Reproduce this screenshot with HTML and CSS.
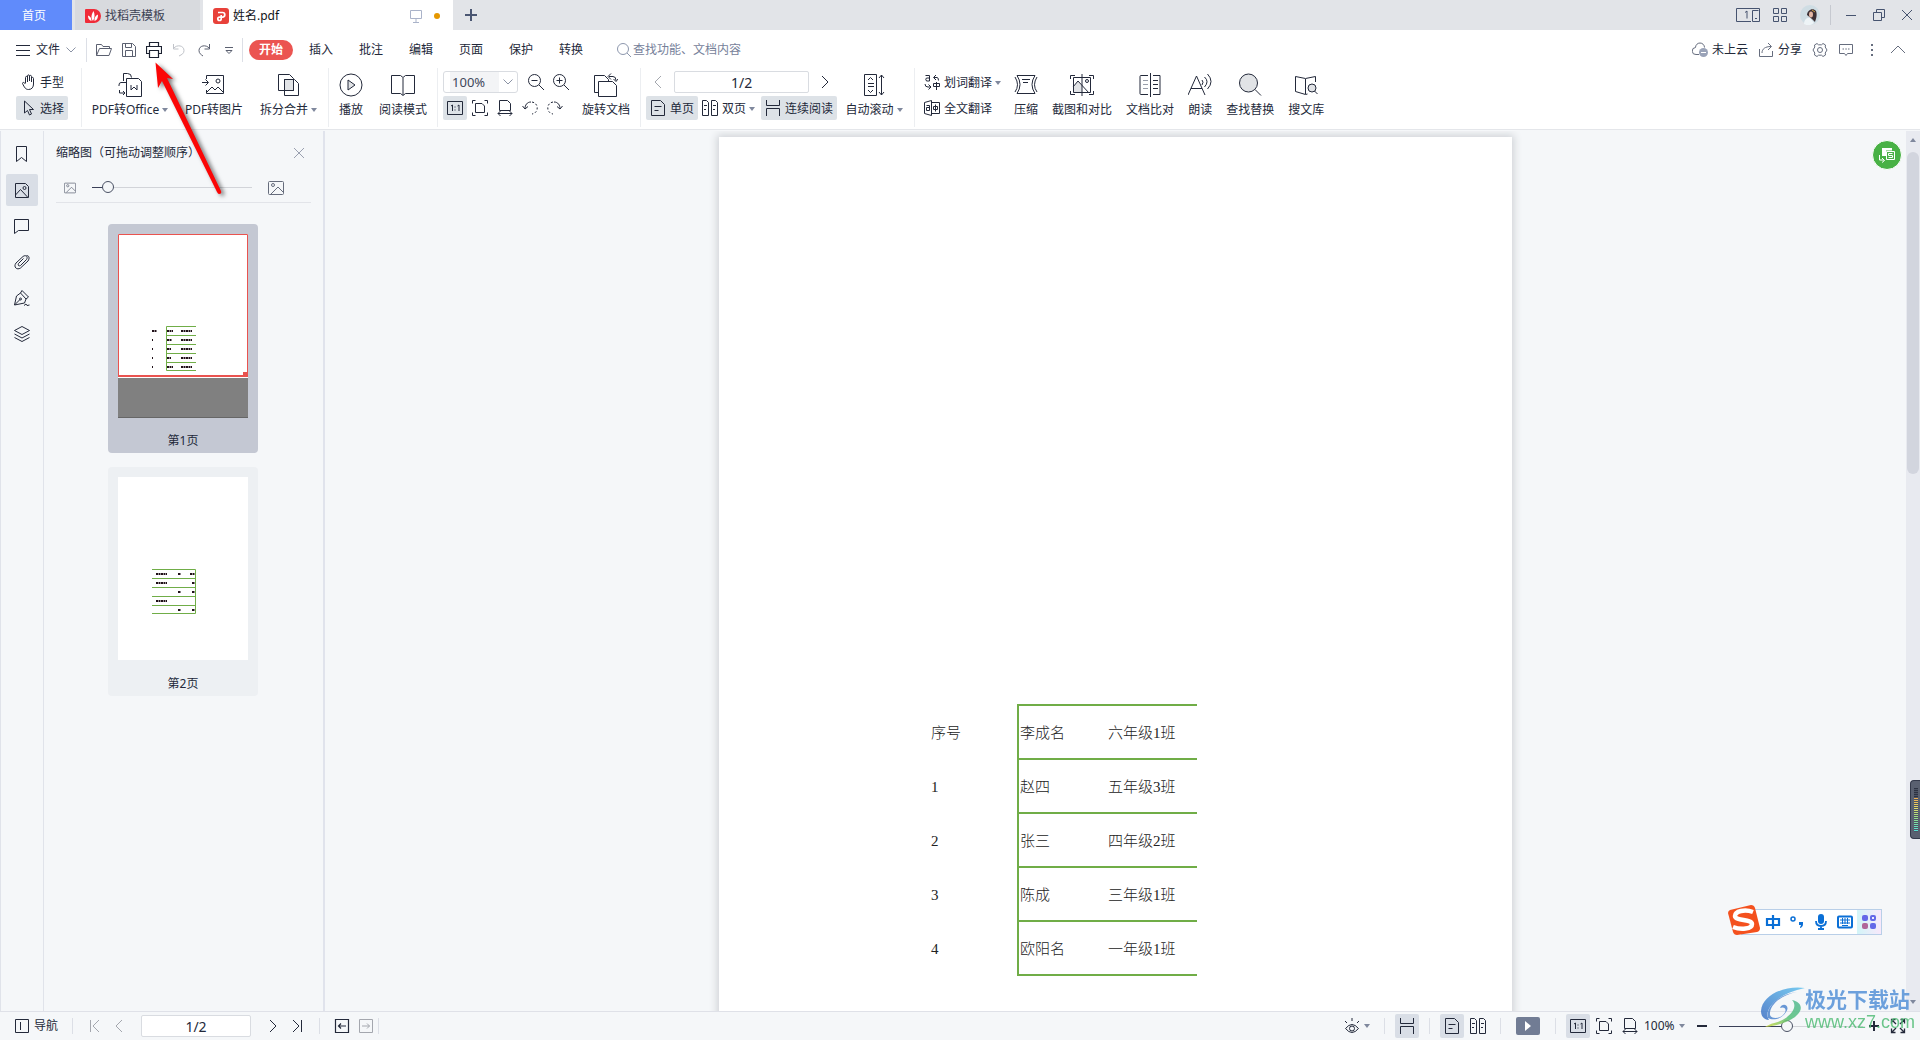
FILE: index.html
```html
<!DOCTYPE html>
<html lang="zh-CN">
<head>
<meta charset="utf-8">
<title>姓名.pdf</title>
<link rel="stylesheet" href="styles.css">
</head>
<body>
<svg class="sprite" aria-hidden="true">
  <symbol id="caret" viewBox="0 0 6 4"><path d="M0 0h6L3 4z" fill="#7f889d" stroke="none"/></symbol>
  <symbol id="one" viewBox="0 0 16 16"><path d="M.5 1.500h15v13H.5zM4 6l1.500-1v6M8 6.500v1M8 9.500v1M10.500 6l1.500-1v6"/></symbol>
  <symbol id="fit" viewBox="0 0 16 16"><path d="M3.500 3.500h6.500l2.500 2.500v6.500h-9zM.5 3.500v-3h3M12.500.5h3v3M15.500 12.500v3h-3M3.500 15.500h-3v-3"/></symbol>
  <symbol id="fitw" viewBox="0 0 16 16"><path d="M2.500 10.500v-10h8l3 3v7zM1 13.500h14M3.500 11L1 13.500 3.500 16M12.500 11l2.500 2.500-2.500 2.500"/></symbol>
  <symbol id="single" viewBox="0 0 16 16"><path d="M1.500.500h9l4 4v11h-13zM4.500 6.500h7M4.500 10.500h4"/></symbol>
  <symbol id="double" viewBox="0 0 16 16"><path d="M.5.500h4l2 2v13h-6zM9.500.500h4l2 2v13h-6zM2 5.500h3M2 9.500h2M11 5.500h3M11 9.500h2"/></symbol>
  <symbol id="cont" viewBox="0 0 16 16"><path d="M1.500 0v5.500h13V0M1.500 16v-7.500h13V16"/></symbol>
  <symbol id="left" viewBox="0 0 16 16"><path d="M11 2L5 8l6 6"/></symbol>
  <symbol id="right" viewBox="0 0 16 16"><path d="M5 2l6 6-6 6"/></symbol>
  <symbol id="pic" viewBox="0 0 16 16"><rect x=".5" y="1.500" width="15" height="13" rx="1"/><circle cx="5" cy="5" r="1.500"/><path d="M3 14l7-7 5 5"/></symbol>
  <symbol id="down" viewBox="0 0 10 6"><path d="M.5.5L5 5 9.500.5"/></symbol>
</svg>

<div class="app">
  <header>
    <div class="titlebar">
      <button class="tab home">首页</button>
      <button class="tab docer">
        <svg class="i16" viewBox="0 0 16 16"><path d="M1 1h8a7 7 0 0 1 0 14H1a1 1 0 0 1-1-1V2a1 1 0 0 1 1-1z" fill="#f02b38" stroke="none"/><path d="M8 13C5.500 10 6.500 6 8.500 3c1.500 3 1.500 7-.5 10zM6.500 13C3.500 12 3 9.500 3 7.500c2 .5 3.500 2.500 3.500 5.500zM9.500 13c-.5-3 1-5.500 3.500-6.500 0 3-.5 5.500-3.500 6.500z" fill="#fff" stroke="none"/></svg>
        <span>找稻壳模板</span>
      </button>
      <div class="tab active">
        <svg class="i16" viewBox="0 0 16 16"><rect width="16" height="16" rx="3" fill="#e8413a" stroke="none"/><path d="M5 4.500h4.500a2.300 2.300 0 0 1 0 4.600H6.500a1.700 1.700 0 1 0 1.700 1.700V7" stroke="#fff" stroke-width="1.700"/></svg>
        <span>姓名.pdf</span>
        <svg class="i16 screen" viewBox="0 0 16 16"><path d="M2.500 2.500h11v8h-11zM8 11v3M5 14.500h6" stroke="#aab3c9"/></svg>
        <i class="dot"></i>
      </div>
      <button class="plus" aria-label="新建"><svg class="i12" viewBox="0 0 12 12"><path d="M6 0v12M0 6h12" stroke="#4a5672" stroke-width="2"/></svg></button>
      <div class="wintools">
        <button aria-label="窗口"><svg class="boxicon" viewBox="0 0 24 16"><path d="M15 14.500H.5v-13h23v13h-7v-11h6M19 11.500h2M9 5.500l2-1.500v7.500"/></svg></button>
        <button aria-label="应用"><svg class="i16" viewBox="0 0 16 16"><path d="M1.500 1.500h5v5h-5zM9.500 1.500h5v5h-5zM1.500 9.500h5v5h-5zM9.500 9.500h5v5h-5z"/></svg></button>
        <svg class="avatar" viewBox="0 0 20 20"><circle cx="10" cy="10" r="10" fill="#cfdde4" stroke="none"/><path d="M7 10c0-5 6-8 9-4 1.500 4 0 8-1 11l-3-3z" fill="#3d3034" stroke="none"/><ellipse cx="11" cy="9.500" rx="2" ry="3" fill="#e3b7a5" stroke="none"/><path d="M4 19c0-4 3-7 6-6l4 5q-5 4-10 1z" fill="#eef4f7" stroke="none"/><path d="M12 5l3 2" stroke="#c79a42"/></svg>
        <i class="vsep"></i>
        <button aria-label="最小化"><svg class="i16" viewBox="0 0 16 16"><path d="M3 8.500h10"/></svg></button>
        <button aria-label="还原"><svg class="i16" viewBox="0 0 16 16"><path d="M2.500 5.500h8v8h-8zM5.500 5V2.500h8v8H11"/></svg></button>
        <button aria-label="关闭"><svg class="i16" viewBox="0 0 16 16"><path d="M3 3l10 10M13 3L3 13"/></svg></button>
      </div>
    </div>

    <div class="menubar">
      <button class="file"><svg class="i14" viewBox="0 0 14 14"><path d="M0 2.500h14M0 7.500h14M0 12.500h14"/></svg><span>文件</span><svg class="chev" viewBox="0 0 10 6"><use href="#down"/></svg></button>
      <div class="quick">
        <button aria-label="打开"><svg class="i16" viewBox="0 0 16 16"><path d="M.5 13.500v-11h5l1.500 2h6.500v2M.5 13.500l3-7h12l-2.500 7z"/></svg></button>
        <button aria-label="保存"><svg class="i16" viewBox="0 0 16 16"><path d="M1.500 1.500h10l3 3v10h-13zM4.500 1.500v4h6v-4M4.500 14.500v-6h7v6"/></svg></button>
        <button aria-label="打印" class="strong"><svg class="i16" viewBox="0 0 16 16"><path d="M3.500 4.500v-4h9v4M3.500 11.500h-3v-7h15v7h-3M3.500 8.500h9v7h-9z" stroke-width="1.200"/></svg></button>
        <button aria-label="撤销" class="faint"><svg class="i16" viewBox="0 0 16 16"><path d="M2.500 2v5h5M2.500 6.500C6 2 13 3.500 13 8.500c0 3-2 4-5 5.500"/></svg></button>
        <button aria-label="恢复"><svg class="i16" viewBox="0 0 16 16"><path d="M13.500 2v5h-5M13.500 6.500C10 2 3 3.500 3 8.500c0 3 2 4 4 5.500"/></svg></button>
        <button aria-label="更多"><svg class="i16" viewBox="0 0 16 16"><path d="M4 5.500h8M5 8.500l3 3 3-3z"/></svg></button>
      </div>
      <nav class="menus">
        <button class="on">开始</button><button>插入</button><button>批注</button><button>编辑</button><button>页面</button><button>保护</button><button>转换</button>
      </nav>
      <label class="search"><svg class="i14" viewBox="0 0 14 14"><circle cx="6" cy="6" r="5.500"/><path d="M10 10l4 4"/></svg><input type="text" placeholder="查找功能、文档内容" aria-label="查找功能、文档内容"></label>
      <div class="menuright">
        <button><svg class="i16" viewBox="0 0 16 16"><path d="M7 12.500H4a3.500 3.500 0 0 1-.5-7 4.500 4.500 0 0 1 9 0"/><circle cx="11.500" cy="10.500" r="4.500" fill="#9aa3b8" stroke="none"/><path d="M9 10.500h5" stroke="#fff"/></svg><span>未上云</span></button>
        <button><svg class="i16" viewBox="0 0 16 16"><path d="M1.500 7v7.500h13V9M4 11c0-4 3-6.500 9-6.500M10 1l3.500 3.500L10 8"/></svg><span>分享</span></button>
        <button aria-label="设置"><svg class="i16" viewBox="0 0 16 16"><path d="M5 1.500l1.500 1.300h3L11 1.500l2.500 1.500-.3 2L15 8l-1.800 3 .3 2-2.500 1.500-1.500-1.300h-3L5 14.500 2.500 13l.3-2L1 8l1.800-3-.3-2z"/><circle cx="8" cy="8" r="2.500"/></svg></button>
        <button aria-label="反馈"><svg class="i16" viewBox="0 0 16 16"><path d="M1.500 2.500h13v9h-5L8 13.500l-1.500-2h-5z"/><path d="M4.500 7h1.500M7.300 7h1.500M10 7h1.500"/></svg></button>
        <button aria-label="更多选项"><svg class="i16" viewBox="0 0 16 16"><path d="M8 2v2M8 7v2M8 12v2" stroke-width="2"/></svg></button>
        <button aria-label="收起"><svg class="i16" viewBox="0 0 16 16"><path d="M1 11l7-7 7 7"/></svg></button>
      </div>
    </div>

    <div class="ribbon">
      <div class="group g1">
        <div class="stack">
          <button class="row"><svg class="i16" viewBox="0 0 16 16"><path d="M4.500 9V3.500c0-1.500 2-1.500 2 0V8M6.500 7V2c0-1.500 2-1.500 2 0v5M8.500 7V2.500c0-1.500 2-1.500 2 0V8M10.500 8V4.500c0-1.500 2-1.500 2 0V10c0 3-1.500 5.500-5 5.500-3 0-4-2-6-6 0-1.500 1.500-1.500 3 .5"/></svg><span>手型</span></button>
          <button class="row sel"><svg class="i16" viewBox="0 0 16 16"><path d="M3.500 1v12l3-2.500 2 4.500 2-1-2-4.500h4z"/></svg><span>选择</span></button>
        </div>
      </div>
      <div class="group g2">
        <button class="tool w76"><svg class="i24" viewBox="0 0 24 24"><path d="M5.500 8V.5h4q4 0 4 4M9 9.500H3q-2 0-2 2.500v1M1.500 17v3h5M5 18l2 2-2 2"/><path d="M8.500 5.500h12l3 3v15h-15zM13 12v5l3-3 3 3v-5"/></svg><span>PDF转Office<svg class="caret"><use href="#caret"/></svg></span></button>
        <button class="tool w58"><svg class="i24" viewBox="0 0 24 24"><path d="M4.500 6V2.500h17v18h-17V17M0 9.500h6M3.500 6.500l3 3-3 3M5 19l5-5 3 3 3-3 5 5"/><circle cx="16" cy="8" r="2"/></svg><span>PDF转图片</span></button>
        <button class="tool w57"><svg class="i24" viewBox="0 0 24 24"><path d="M7.500 6.500h9v11h-9z" fill="#e1e3e6"/><path d="M1.500 1.500h11l4 4v12h-15zM7.500 6.500h10l4 4v12h-14z"/></svg><span>拆分合并<svg class="caret"><use href="#caret"/></svg></span></button>
      </div>
      <div class="group g3">
        <button class="tool"><svg class="i24" viewBox="0 0 24 24"><circle cx="12" cy="12" r="11"/><path d="M9 7v10l7-5z" fill="#e1e3e6"/></svg><span>播放</span></button>
        <button class="tool"><svg class="i24" viewBox="0 0 24 24"><path d="M.5 2.500h9l2.500 2 2.500-2h9v18h-9l-2.500 2-2.500-2h-9zM12 5v17"/></svg><span>阅读模式</span></button>
      </div>
      <div class="group g4">
        <div class="stack">
          <div class="line">
            <div class="zoombox"><select aria-label="缩放比例"><option>100%</option></select><svg class="chev" viewBox="0 0 10 6"><use href="#down"/></svg></div>
            <button class="sq" aria-label="缩小"><svg class="i16" viewBox="0 0 16 16"><circle cx="6.500" cy="6.500" r="6"/><path d="M11 11l5 5M3.500 6.500h6"/></svg></button>
            <button class="sq" aria-label="放大"><svg class="i16" viewBox="0 0 16 16"><circle cx="6.500" cy="6.500" r="6"/><path d="M11 11l5 5M3.500 6.500h6M6.500 3.500v6"/></svg></button>
          </div>
          <div class="line">
            <button class="sq sel" aria-label="实际大小"><svg class="i16"><use href="#one"/></svg></button>
            <button class="sq" aria-label="适合页面"><svg class="i16"><use href="#fit"/></svg></button>
            <button class="sq" aria-label="适合宽度"><svg class="i16"><use href="#fitw"/></svg></button>
            <button class="sq" aria-label="向左旋转"><svg class="i16" viewBox="0 0 16 16"><path d="M.5 6l2.500 3 3-2.500M3 9C3 5 5 2 9 2"/><path d="M10 2c7 1 7 11 0 12" stroke-dasharray="2 2"/></svg></button>
            <button class="sq" aria-label="向右旋转"><svg class="i16" viewBox="0 0 16 16"><path d="M15.500 6L13 9l-3-2.500M13 9c0-4-2-7-6-7"/><path d="M6 2c-7 1-7 11 0 12" stroke-dasharray="2 2"/></svg></button>
          </div>
        </div>
        <button class="tool"><svg class="i24" viewBox="0 0 24 24"><path d="M4 19.500H.5v-17h10l4 4v2M4.500 23.500v-15h14l4 4v11zM15 3.500h4q3 0 3 4M17 .5l-3 3 3 3M19.500 6l2.500 2.500L24 6"/></svg><span>旋转文档</span></button>
      </div>
      <div class="group g5">
        <div class="stack">
          <div class="line pager">
            <button class="sq faint" aria-label="上一页"><svg class="i16"><use href="#left"/></svg></button>
            <input type="text" value="1/2" aria-label="页码">
            <button class="sq" aria-label="下一页"><svg class="i16"><use href="#right"/></svg></button>
          </div>
          <div class="line modes">
            <button class="row sel"><svg class="i16"><use href="#single"/></svg><span>单页</span></button>
            <button class="row dbl"><svg class="i16"><use href="#double"/></svg><span>双页<svg class="caret"><use href="#caret"/></svg></span></button>
            <button class="row sel"><svg class="i16"><use href="#cont"/></svg><span>连续阅读</span></button>
          </div>
        </div>
        <button class="tool w56"><svg class="i24" viewBox="0 0 24 24"><path d="M2.500 1.500h12v21h-12zM6 7l2.500-2.500L11 7M6 10.500h6M6 13.500h6M6 17l2.500 2.500L11 17M19.500 2v20M17 5l2.500-3L22 5M17 19l2.500 3 2.500-3"/></svg><span>自动滚动<svg class="caret"><use href="#caret"/></svg></span></button>
      </div>
      <div class="group g6">
        <div class="stack trans">
          <button class="row"><svg class="i16" viewBox="0 0 16 16"><path d="M1.500 1.500h4v5.500h-3q-1.500-2 0-3h3M10 3.500h3q1.500 0 1.500 3M12 1l-2.500 2.500L12 6M1 10q0 3 3 3h2M4.500 10.500L7 13l-2.500 2.500M9.500 9.500h6v3h-6zM12.500 8v8"/></svg><span>划词翻译<svg class="caret"><use href="#caret"/></svg></span></button>
          <button class="row"><svg class="i16" viewBox="0 0 16 16"><path d="M.5 2.500l7-2v15l-7-2zM7.500 2.500h8v11h-8M2.500 5.500h3v5h-3v-3h3M9.500 6.500h4v3h-4zM11.500 4.500v7"/></svg><span>全文翻译</span></button>
        </div>
        <button class="tool"><svg class="i24" viewBox="0 0 24 24"><path d="M3 2.500h18q-6 9 0 18H3q6-9 0-18M8 6.500h8M9 9.500h5M1 4q5 8 0 15M23 4q-5 8 0 15"/></svg><span>压缩</span></button>
        <button class="tool"><svg class="i24" viewBox="0 0 24 24"><path d="M3 14l5-6 4 5v7H3z" fill="#e1e3e6" stroke="none"/><path d="M.5 6V2.500H5M19 2.500h4.500V6M23.500 18v3.500H19M5 21.500H.5V18M3.500 4.500h17v15h-17zM12 1v22M3 14l5-6 11 12"/><circle cx="17" cy="8" r="1.500"/></svg><span>截图和对比</span></button>
        <button class="tool"><svg class="i24" viewBox="0 0 24 24"><path d="M10 21.500H3q-1 0-1-1v-17q0-1 1-1h7M12.500 0v24M15 2.500h7v19h-7M15 7.500h5M15 11.500h5M15 15.500h5"/><path d="M5 7.500h5M5 11.500h5M5 15.500h5" stroke="#9a9fab"/></svg><span>文档比对</span></button>
        <button class="tool"><svg class="i24" viewBox="0 0 24 24"><path d="M0 22L8.500 3 17 22M3 15.500h11M14 7q2 2 0 5M16.500 4q5 4.500 0 10M19.500 1q7 7.500 0 15"/></svg><span>朗读</span></button>
        <button class="tool"><svg class="i24" viewBox="0 0 24 24"><circle cx="10.500" cy="10" r="9" fill="#e1e3e6"/><path d="M17 16.500l6 6"/></svg><span>查找替换</span></button>
        <button class="tool"><svg class="i24" viewBox="0 0 24 24"><path d="M21.500 9V3.500l-10 2-10-2v15l10 3 2-.5M11.500 6v15"/><circle cx="18" cy="15" r="4" fill="#e1e3e6"/><path d="M20.500 18l3 3"/></svg><span>搜文库</span></button>
      </div>
    </div>
  </header>

  <main>
    <aside class="rail">
      <button aria-label="书签"><svg class="i16" viewBox="0 0 16 16"><path d="M2.500.5h10v15l-5-4-5 4z"/></svg></button>
      <button aria-label="缩略图" class="sel"><svg class="i16" viewBox="0 0 16 16"><path d="M1.500 1.500h10l3 3v11h-13zM1.500 13l5-5.500 7 7.500"/><circle cx="10.500" cy="6" r="1.500"/></svg></button>
      <button aria-label="批注"><svg class="i16" viewBox="0 0 16 16"><path d="M.5 1.500h14v11h-10l-4 3z"/></svg></button>
      <button aria-label="附件"><svg class="i16" viewBox="0 0 16 16"><path d="M9.500 4.500l-5 5c-1 2 .5 3 2 2l6-6c2-3-1-5-3.500-3L2 9c-3 4 1 7.500 4.500 5l7.500-7c2-3 1-5.500-1.500-5.500"/></svg></button>
      <button aria-label="签名"><svg class="i16" viewBox="0 0 16 16"><path d="M8 .5L14.500 7M6.500 3l5.500 6-1.500 4-10 2L2.500 6zM.5 15L6 9.500M8 .5L6.500 3M14.500 7L12 9M10 15.500l2-1.500 1 1.500 2.500-.5"/><circle cx="6.500" cy="9" r="1"/></svg></button>
      <button aria-label="图层"><svg class="i16" viewBox="0 0 16 16"><path d="M8 .5l7.500 4L8 8.500l-7.500-4zM.5 8L8 12l7.500-4M.5 11.500l7.500 4 7.500-4"/></svg></button>
    </aside>

    <section class="thumbs">
      <div class="thumbhead"><h2>缩略图（可拖动调整顺序）</h2><button aria-label="关闭面板"><svg class="i10" viewBox="0 0 10 10"><path d="M0 0l10 10M10 0L0 10" stroke="#9aa0b0"/></svg></button></div>
      <div class="sizer"><svg class="i12"><use href="#pic"/></svg><input type="range" class="size" min="0" max="100" value="7" aria-label="缩略图大小"><svg class="i16"><use href="#pic"/></svg></div>
      <button class="card current">
        <svg class="mini" viewBox="0 0 130 184"><path d="M0 0h130v184H0z" fill="#808080" stroke="none"/><path d="M0 183.500h130" stroke="#666"/><path d="M0 0h130v144H0z" fill="#fff" stroke="none"/><path d="M.5.5h129v141H.5z" stroke="#e9534f"/><path d="M0 141h130v2H0zM125 138h5v4h-5z" fill="#e9534f" stroke="none"/>
          <path d="M78 92.500H48.500v44H78M48 101.500h30M48 110.500h30M48 119.500h30M48 128.500h30" stroke="#70ad47"/>
          <path d="M34 97h5M34 106h1M34 115h1M34 124h1M34 133h1M49 97h6M49 106h5M49 115h4M49 124h4M49 133h6M63 97h11M63 106h11M63 115h11M63 124h11M63 133h11" stroke="#201018" stroke-width="2" stroke-dasharray="2 .5"/></svg>
        <span>第1页</span>
      </button>
      <button class="card">
        <svg class="mini" viewBox="0 0 130 184"><path d="M0 0h130v183H0z" fill="#fff" stroke="none"/>
          <path d="M34 92.500h43.500v44H34M34 101.500h43M34 110.500h43M34 119.500h43M34 128.500h43" stroke="#70ad47"/>
          <path d="M38 97h11M60 97h3M72 97h5M38 106h11M74 106h3M60 115h3M74 115h3M38 124h11M60 133h3M74 133h3" stroke="#201018" stroke-width="2" stroke-dasharray="2 .5"/></svg>
        <span>第2页</span>
      </button>
    </section>

    <section class="viewer">
      <article class="page">
        <table>
          <tr><th scope="row">序号</th><td>李成名</td><td>六年级1班</td></tr>
          <tr><th scope="row">1</th><td>赵四</td><td>五年级3班</td></tr>
          <tr><th scope="row">2</th><td>张三</td><td>四年级2班</td></tr>
          <tr><th scope="row">3</th><td>陈成</td><td>三年级1班</td></tr>
          <tr><th scope="row">4</th><td>欧阳名</td><td>一年级1班</td></tr>
        </table>
      </article>
      <button class="convert" aria-label="转换为表格"><svg class="i16" viewBox="0 0 16 16"><path d="M3 1h10v2.500H7V9H3z" fill="#fff" stroke="none"/><path d="M7.500 4.500h8v8h-8zM13.500 6.500h-4v2h4v2h-4M.5 8v5H5M3 11l2.500 2.500L3 15.500" stroke="#fff"/></svg></button>
      <div class="ime">
        <svg class="sogou" viewBox="0 0 32 30"><path d="M2 5L23 0q3 0 4 3l5 20q0 3-3 4L9 30q-3 0-4-3L0 8q0-2 2-3z" fill="#f4511e" stroke="none"/><path d="M25 7C17 4 7 6 7 11s17 3 17 8-11 6-19 3" stroke="#fff" stroke-width="4.500"/></svg>
        <button aria-label="中文"><svg class="i16" viewBox="0 0 16 16"><path d="M2 5h12v6H2zM8 1v14" stroke-width="2.200"/></svg></button>
        <button aria-label="标点"><svg class="i16" viewBox="0 0 16 16"><circle cx="4" cy="5" r="2" stroke-width="1.500"/><path d="M10 8h4v2q0 3-3 4v-1q1-1 1-2h-2z" fill="#0a6fd6" stroke="none"/></svg></button>
        <button aria-label="语音"><svg class="i16" viewBox="0 0 16 16"><rect x="5" y="0" width="6" height="10" rx="3" fill="#0a6fd6" stroke="none"/><path d="M3 7q0 5 5 5t5-5M8 12v3M5 15h6" stroke-width="1.800"/></svg></button>
        <button aria-label="键盘"><svg class="i16" viewBox="0 0 16 16"><rect x="1" y="2.500" width="14" height="11" rx="1" stroke-width="2"/><path d="M3 6h10M3 9h10M5 11.500h6M5.500 4v6M8 4v6M10.500 4v6"/></svg></button>
        <button aria-label="工具箱" class="box"><svg class="i16" viewBox="0 0 16 16"><g stroke="none" fill="#6468e8"><rect x="1" y="1" width="6" height="6" rx="2"/><rect x="1" y="9" width="6" height="6" rx="2" fill="#b0659a"/><rect x="9" y="9" width="6" height="6" rx="2"/></g><rect x="10" y="2" width="4" height="4" rx="1" stroke="#6468e8" stroke-width="2"/></svg></button>
      </div>
    </section>
    <div class="scroll">
      <svg class="caret up"><use href="#caret"/></svg>
      <i class="thumb"></i>
      <svg class="caret"><use href="#caret"/></svg>
      <div class="meter"><i></i></div>
    </div>
  </main>

  <footer>
    <button class="navbtn"><svg class="i14" viewBox="0 0 14 14"><path d="M.5.5h13v13H.5zM5.500 3v8"/></svg><span>导航</span></button>
    <i class="vsep s1"></i>
    <button class="sq faint" aria-label="首页"><svg class="i16" viewBox="0 0 16 16"><path d="M3.500 2v12M12 2L6 8l6 6"/></svg></button>
    <button class="sq faint" aria-label="上一页"><svg class="i16"><use href="#left"/></svg></button>
    <input type="text" class="pageno" value="1/2" aria-label="当前页">
    <button class="sq" aria-label="下一页"><svg class="i16"><use href="#right"/></svg></button>
    <button class="sq" aria-label="末页"><svg class="i16" viewBox="0 0 16 16"><path d="M12.500 2v12M4 2l6 6-6 6"/></svg></button>
    <i class="vsep s2"></i>
    <button class="sq" aria-label="后退"><svg class="i16" viewBox="0 0 16 16"><path d="M1.500 1.500h13v13h-13zM4.500 8H12M7 5.500L4.500 8 7 10.500" stroke-width="1.200"/></svg></button>
    <button class="sq faint" aria-label="前进"><svg class="i16" viewBox="0 0 16 16"><path d="M1.500 1.500h13v13h-13zM4 8h7.500M9 5.500L11.500 8 9 10.500"/></svg></button>
    <i class="vsep"></i>
    <div class="statusright">
      <button class="eye" aria-label="护眼"><svg class="i16" viewBox="0 0 16 16"><path d="M1.500 10.500q6.500-8 13 0-6.500 8-13 0M8 0v3M1 3l2 2M15 3l-2 2"/><circle cx="8" cy="10.500" r="2.500"/></svg><svg class="caret"><use href="#caret"/></svg></button>
      <i class="vsep"></i>
      <button class="sq sel" aria-label="连续阅读"><svg class="i16"><use href="#cont"/></svg></button>
      <i class="vsep"></i>
      <div class="pair"><button class="sq sel" aria-label="单页"><svg class="i16"><use href="#single"/></svg></button><button class="sq" aria-label="双页"><svg class="i16"><use href="#double"/></svg></button></div>
      <i class="vsep"></i>
      <button class="play" aria-label="播放"><svg class="i10" viewBox="0 0 10 10"><path d="M2 0l6 5-6 5z" fill="#fff" stroke="none"/></svg></button>
      <i class="vsep"></i>
      <div class="pair"><button class="sq sel" aria-label="实际大小"><svg class="i16"><use href="#one"/></svg></button><button class="sq" aria-label="适合页面"><svg class="i16"><use href="#fit"/></svg></button><button class="sq" aria-label="适合宽度"><svg class="i16"><use href="#fitw"/></svg></button><button class="pct">100%<svg class="caret"><use href="#caret"/></svg></button></div>
      <div class="zoomer">
        <button aria-label="缩小"><svg class="i16" viewBox="0 0 16 16"><path d="M3 8h10" stroke-width="2"/></svg></button>
        <input type="range" class="zoomrange" min="0" max="100" value="47" aria-label="缩放">
        <button aria-label="放大"><svg class="i16" viewBox="0 0 16 16"><path d="M3 8h10M8 3v10" stroke-width="2"/></svg></button>
        <button aria-label="全屏" class="full"><svg class="i16" viewBox="0 0 16 16"><path d="M1.500 5.500v-4h4M10.500 1.500h4v4M14.500 10.500v4h-4M5.500 14.500h-4v-4M1.500 1.500L6 6M14.500 1.500L10 6M14.500 14.500L10 10M1.500 14.500L6 10" stroke-width="1.300"/></svg></button>
      </div>
    </div>
  </footer>
</div>

<div class="brand">
  <svg class="swoosh" viewBox="0 0 44 42"><defs><linearGradient id="bl" x1="0" y1="1" x2="1" y2="0"><stop offset="0" stop-color="#3d6fc4"/><stop offset="1" stop-color="#62c4f0"/></linearGradient><linearGradient id="gr" x1="0" y1="1" x2="1" y2="0"><stop offset="0" stop-color="#d6dc3c"/><stop offset=".5" stop-color="#55c07a"/><stop offset="1" stop-color="#55b995"/></linearGradient></defs><path d="M44 1C24-2 1 8 0 24c0 6 4 9 8 9C1 22 18 6 44 1z" fill="url(#bl)" stroke="none"/><path d="M36 5C20 8 8 18 9 28c1 4 9 4 13 0 5-5 2-9-3-7 2-6 11-3 6 4-4 7-13 9-18 6-3-10 10-24 29-26z" fill="#4f86cf" stroke="none"/><path d="M31 13c16 3 12 22-27 27 6-4 11-4 15-6 12-5 18-15 12-21z" fill="url(#gr)" stroke="none"/></svg>
  <p><b>极光下载站</b><span>www.xz7.com</span></p>
</div>
<svg class="pointer" viewBox="0 0 80 144"><path d="M5.500 6.500L23 23l-6-1 54 113q1 3-2 3-1 0-2-2L12 25l-4 7z" fill="#fb0606" stroke="none"/></svg>
</body>
</html>
```
FILE: styles.css
```css
* { box-sizing: border-box; }
body { margin: 0; overflow: hidden; font: 12px/16px "Noto Sans", "Noto Sans CJK SC", sans-serif; color: #23293a; }
button, input, select { font: inherit; color: inherit; }
button { border: 0; padding: 0; background: none; display: flex; align-items: center; white-space: nowrap; }
input { min-width: 0; }
svg { fill: none; stroke: currentColor; flex: none; display: block; }
.sprite { position: absolute; width: 0; height: 0; }
.i10 { width: 10px; height: 10px; }
.i12 { width: 12px; height: 12px; }
.i14 { width: 14px; height: 14px; }
.i16 { width: 16px; height: 16px; }
.i24 { width: 24px; height: 24px; }
.caret { width: 6px; height: 4px; }
.chev { width: 10px; height: 6px; color: #8b93a5; }
.vsep { width: 1px; height: 16px; background: #dcdfe6; }
.sel { background: #dde2e7; border-radius: 2px; }
.faint { color: #a4a7ae; }
.sq { width: 24px; height: 24px; justify-content: center; }

.app { height: 100vh; display: grid; grid-template-rows: auto minmax(0, 1fr) auto; }

/* title bar */
.titlebar { display: flex; height: 30px; background: #e2e4e8; gap: 3px; }
.tab { height: 30px; gap: 4px; padding-top: 2px; font-size: 12px; }
.home { width: 72px; padding-right: 4px; justify-content: center; background: #608bfb; color: #fff; }
.docer { width: 125px; padding-left: 10px; background: #d8dade; color: #3d4254; }
.active { display: flex; align-items: center; width: 250px; padding: 2px 13px 0 10px; background: #fff; color: #101218; }
.screen { margin-left: auto; }
.dot { width: 6px; height: 6px; margin-left: 6px; border-radius: 50%; background: #e59700; }
.plus { width: 30px; justify-content: center; }
.wintools { display: flex; align-items: center; gap: 12px; margin-left: auto; padding-right: 5px; color: #46536f; }
.wintools .vsep { height: 20px; margin-left: -2px; background: #c6c9d0; }
.boxicon { width: 24px; height: 16px; }
.avatar { width: 20px; height: 20px; }

/* menu bar */
.menubar { display: flex; align-items: center; height: 38px; padding: 1px 14px 0 16px; background: #fff; }
.file { gap: 6px; padding-right: 10px; }
.quick { display: flex; align-items: center; gap: 1px; height: 24px; padding: 0 1px 0 5px; border: solid #dcdfe6; border-width: 0 1px; color: #5b6070; }
.quick button { width: 24px; height: 24px; justify-content: center; }
.quick .strong { color: #1b2130; }
.quick .faint { color: #c0c3c9; }
.menus { display: flex; gap: 6px; padding: 0 24px 0 6px; }
.menus button { width: 44px; height: 20px; justify-content: center; border-radius: 10px; }
.menus .on { background: #eb5451; color: #fff; font-weight: bold; }
.search { display: flex; align-items: center; gap: 2px; color: #8d97ad; }
.search input { width: 130px; padding: 0; border: 0; outline: 0; }
.search input::placeholder { color: #76819a; opacity: 1; }
.menuright { display: flex; align-items: center; gap: 10px; margin-left: auto; color: #666d7e; }
.menuright button { gap: 4px; }
.menuright span { color: #23293a; }

/* ribbon */
.ribbon { display: flex; height: 62px; background: #fff; border-bottom: 1px solid #e4e6ea; }
.group { display: flex; align-items: flex-start; height: 59px; padding-top: 2px; border-right: 1px solid #eceef1; }
.stack { display: grid; gap: 2px; }
.line { display: flex; gap: 1px; height: 24px; align-items: center; }
.row { height: 24px; gap: 4px; padding: 0 4px; }
.tool { flex-direction: column; padding-top: 3px; }
.tool span { display: flex; align-items: center; justify-content: center; gap: 3px; line-height: 26px; }
.row span { display: flex; align-items: center; gap: 3px; line-height: 18px; padding-top: 1px; }
.w76 { width: 76px; }
.w58 { width: 58px; }
.w57 { width: 57px; }
.w56 { width: 56px; }
.g1 { padding-left: 16px; padding-right: 13px; }
.g1 .row { width: 52px; padding: 0 0 0 5px; gap: 3px; }
.g2 { padding-left: 10px; padding-right: 11px; gap: 17px; }
.g3 { padding-left: 10px; padding-right: 10px; gap: 16px; }
.g4 { padding-left: 5px; padding-right: 10px; gap: 9px; }
.g5 { padding-left: 5px; padding-right: 12px; gap: 9px; }
.g6 { padding-left: 8px; gap: 14px; border: 0; }
.zoombox { display: flex; align-items: center; width: 75px; height: 22px; margin-right: 5px; padding: 0 4px 0 6px; gap: 4px; border: 1px solid #d9dce1; border-radius: 3px; }
.zoombox select { appearance: none; width: 50px; height: 20px; padding: 0 2px; border: 0; background: #f3f4f6; font-size: 13px; line-height: 18px; color: #40475a; }
.pager { justify-content: space-between; }
.pager input { width: 135px; height: 22px; }
.pager input, .pageno { border: 1px solid #d9dce1; border-radius: 2px; background: #fff; text-align: center; font-size: 14px; padding: 0; }
.modes { gap: 3px; }
.modes .dbl { width: 57px; padding: 0 1px; }
.trans { width: 77px; }
.trans .row { padding: 0 1px; }

/* work area */
main { display: flex; min-height: 0; background: #f5f7f9; padding-top: 1px; }
.rail { width: 44px; flex: none; display: flex; flex-direction: column; gap: 4px; padding: 7px 5px; border: solid #e0e3ea; border-width: 0 1px; }
.rail button { width: 32px; height: 32px; justify-content: center; }
.rail .sel { background: #d9dee6; }
.thumbs { width: 281px; flex: none; display: flex; flex-direction: column; align-items: center; gap: 14px; padding-right: 1px; border-right: 2px solid #e0e3ec; }
.thumbhead { align-self: stretch; display: flex; align-items: center; justify-content: space-between; height: 44px; padding: 0 18px 0 12px; }
.thumbhead h2 { margin: 0; font-size: 12px; font-weight: normal; }
.sizer { display: flex; align-items: center; width: 255px; height: 28px; margin: -14px 0 7px; padding: 0 27px 2px 8px; border-bottom: 1px solid #e2e4e9; color: #666c7c; justify-content: space-between; }
input[type="range"] { appearance: none; height: 14px; background: none; }
input[type="range"]::-webkit-slider-thumb { appearance: none; width: 12px; height: 12px; margin-top: -6px; border: 1px solid #4a5164; border-radius: 50%; background: #f5f7f9; }
input[type="range"]::-webkit-slider-runnable-track { height: 1px; background: linear-gradient(90deg, #3a4058 var(--fill), #d2d4d9 var(--fill)); }
.size { width: 160px; margin: 0; --fill: 8%; }
.card { flex-direction: column; width: 150px; height: 229px; padding: 10px; border-radius: 4px; background: #edf0f3; }
.current { background: #c4c8d3; }
.mini { width: 130px; height: 184px; }
.card span { margin-top: 15px; }
.viewer { flex: 1; min-width: 0; position: relative; display: flex; justify-content: center; align-items: flex-start; overflow: hidden; padding-top: 6px; }
.page { width: 793px; height: 1122px; flex: none; padding: 567px 0 0 212px; background: #fff; box-shadow: 0 0 8px 2px #cfd2d6; }
table { border-collapse: collapse; table-layout: fixed; width: 266px; font: 15px/20px "Liberation Serif", "Noto Sans CJK SC", serif; font-weight: 300; color: #222; }
tr { height: 54px; }
th { width: 87px; padding: 2px 0 0; text-align: left; font-weight: 300; }
td { padding: 2px 0 0 1px; border: solid #70ad47; border-width: 2px 0; }
td:nth-child(2) { width: 89px; border-left-width: 2px; }
.convert { position: absolute; right: 4px; top: 9px; width: 30px; height: 30px; justify-content: center; border: 1px solid #fff; border-radius: 50%; background: #48b145; }
.ime { position: absolute; right: 24px; bottom: 76px; display: flex; align-items: center; height: 26px; width: 141px; padding-left: 19px; border: 1px solid #b9cfe8; background: #fff; color: #0a6fd6; }
.ime button { width: 24px; height: 24px; justify-content: center; }
.ime .box { background: linear-gradient(90deg, #d2f5f8, #f8e8fb); flex: none; }
.sogou { position: absolute; left: -14px; top: -5px; width: 32px; height: 30px; }
.scroll { position: relative; width: 14px; flex: none; display: flex; flex-direction: column; align-items: center; padding: 7px 0; background: #e8eaf0; }
.up { transform: rotate(180deg); }
.thumb { width: 12px; height: 322px; margin: 10px 0 auto; border-radius: 6px; background: #d2d5de; }
.meter { position: absolute; right: 0; bottom: 172px; width: 10px; height: 59px; padding: 7px 3px; border: 1px solid #33394a; border-right: 0; border-radius: 4px 0 0 4px; background: #596070; }
.meter i { display: block; width: 4px; height: 44px; background: repeating-linear-gradient(#0000 0 1px, #4c5363 1px 2px), linear-gradient(#2c3242 22%, #f0ac50 22%, #e5dd6a 45%, #8fe08b 70%, #52e0dc); }

/* status bar */
footer { display: flex; align-items: center; height: 29px; padding: 0 14px 0 15px; background: #f5f7f9; border-top: 1px solid #dfe1e8; }
.navbtn { gap: 5px; }
.s1 { margin: 0 10px 0 14px; }
.pageno { width: 110px; height: 22px; margin: 0 10px; }
.s2 { margin: 0 10px; }
.statusright { display: flex; align-items: center; gap: 10px; margin-left: auto; }
.statusright .sel { background: #d9dee6; }
.eye { gap: 4px; padding-right: 4px; }
.pair { display: flex; gap: 2px; }
.play { width: 24px; height: 18px; margin: 0 5px; justify-content: center; border-radius: 2px; background: #717c94; }
.pct { gap: 4px; width: 40px; }
.zoomer { display: flex; align-items: center; gap: 3px; }
.zoomrange { width: 144px; margin: 0 0 0 6px; --fill: 47%; }
.full { margin-left: 5px; }

/* overlays */
.brand { position: absolute; right: 9px; bottom: 7px; display: flex; pointer-events: none; opacity: .85; }
.swoosh { width: 44px; height: 42px; }
.brand p { margin: 0; display: flex; flex-direction: column; width: 106px; white-space: nowrap; }
.brand b { font-size: 21px; line-height: 24px; color: #5592d8; }
.brand span { font: 18px/22px "Liberation Sans", sans-serif; color: #53bd78; }
.pointer { position: absolute; left: 150px; top: 56px; width: 80px; height: 144px; pointer-events: none; filter: drop-shadow(3px 2px 2px #0008); }
```
